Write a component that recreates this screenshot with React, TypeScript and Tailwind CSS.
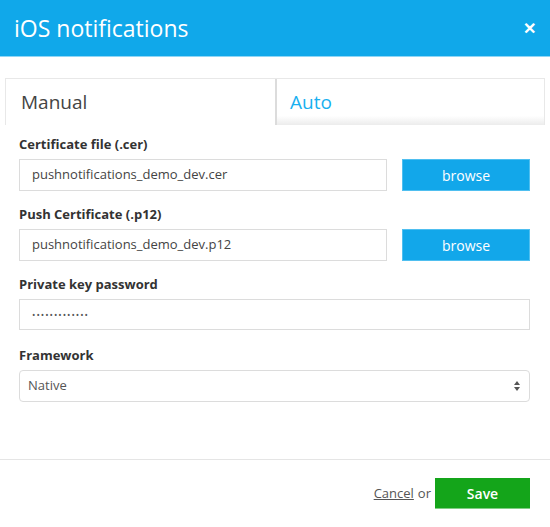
import React from "react";

const font = { fontFamily: '"Open Sans", "Noto Sans", sans-serif' };

function FileRow({ label, value }: { label: string; value: string }) {
  return (
    <div className="mb-[14px]">
      <div className="text-[13px] font-bold text-[#333] leading-[18px] mb-[6px]">{label}</div>
      <div className="flex items-center">
        <div className="w-[368px] h-[32px] border border-[#dcdcdc] px-[12px] flex items-center text-[13px] text-[#444]">
          {value}
        </div>
        <button className="ml-[15px] w-[128px] h-[32px] bg-[#12a7ea] border border-[#4fbff0] text-white text-[14px]">
          browse
        </button>
      </div>
    </div>
  );
}

export default function App() {
  return (
    <div style={font} className="w-[550px] h-[527px] bg-white relative overflow-hidden">
      <div className="h-[57px] bg-[#10a8ea] border-b border-[#8fd6f6] flex items-center justify-between pl-[14px] pr-[14px]">
        <span className="text-white text-[23px] leading-none">iOS notifications</span>
        <span className="text-white text-[16px] font-bold">✕</span>
      </div>

      <div className="mt-[21px] mx-[5px] flex h-[47px] border-t border-[#e8e8e8]">
        <div className="w-[270px] border-l border-[#e8e8e8] flex items-center pl-[15px] text-[19px] text-[#444] bg-white">
          Manual
        </div>
        <div className="flex-1 border-l-2 border-r border-l-[#dcdcdc] border-r-[#e8e8e8] flex items-center pl-[13px] text-[19px] text-[#18b0f0] bg-gradient-to-b from-white from-80% to-[#ececec]">
          Auto
        </div>
      </div>

      <div className="px-[19px] pt-[10px]">
        <FileRow label="Certificate file (.cer)" value="pushnotifications_demo_dev.cer" />
        <FileRow label="Push Certificate (.p12)" value="pushnotifications_demo_dev.p12" />

        <div className="mb-[16px]">
          <div className="text-[13px] font-bold text-[#333] leading-[18px] mb-[6px]">Private key password</div>
          <div className="w-[511px] h-[31px] border border-[#dcdcdc] px-[12px] flex items-center text-[9px] text-[#555] tracking-[1px]">
            •••••••••••••
          </div>
        </div>

        <div>
          <div className="text-[13px] font-bold text-[#333] leading-[18px] mb-[6px]">Framework</div>
          <div className="w-[511px] h-[32px] border border-[#dcdcdc] rounded-[4px] px-[8px] flex items-center justify-between text-[13px] text-[#555]">
            <span>Native</span>
            <svg width="8" height="12" viewBox="0 0 8 12">
              <path d="M4 1 L7 5 L1 5 Z" fill="#555" />
              <path d="M4 11 L7 7 L1 7 Z" fill="#555" />
            </svg>
          </div>
        </div>
      </div>

      <div className="absolute left-0 right-0 top-[459px] border-t border-[#e5e5e5] h-[68px] flex items-center justify-end pr-[20px]">
        <span className="text-[13px] text-[#555] underline mr-[4px]">Cancel</span>
        <span className="text-[13px] text-[#555] mr-[4px]">or</span>
        <button className="w-[95px] h-[31px] bg-[#14a51a] text-white text-[14px] font-semibold border-b border-[#7fcf82]">
          Save
        </button>
      </div>
    </div>
  );
}
